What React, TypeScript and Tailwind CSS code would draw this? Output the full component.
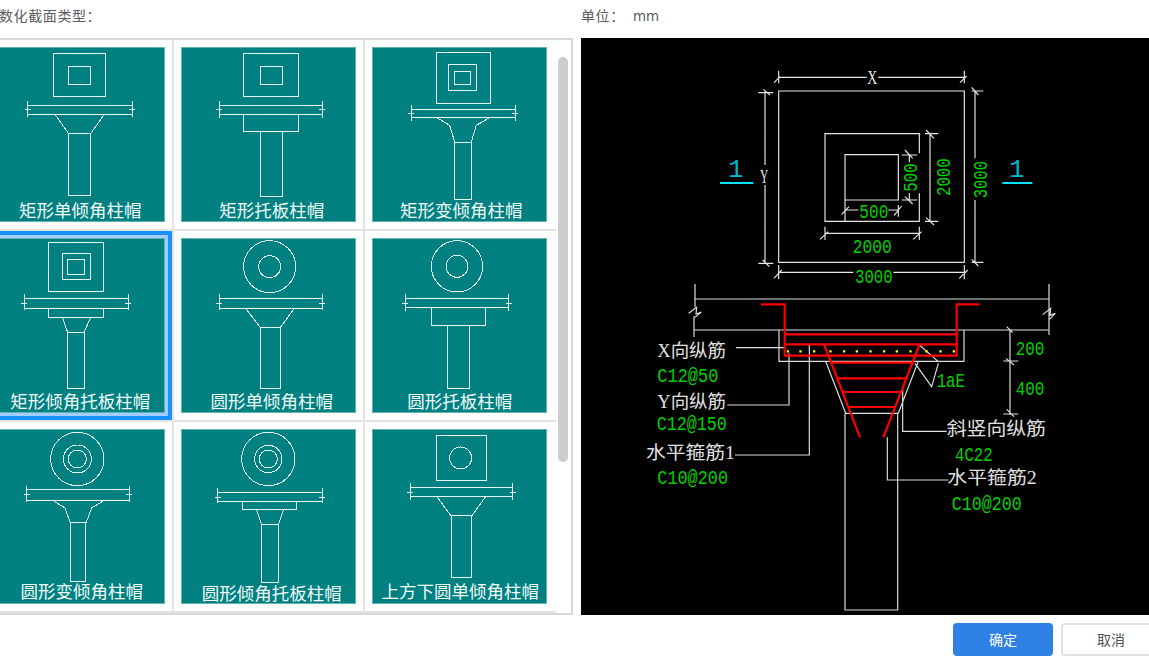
import React from "react";

const Slab = ({ x1, x2, y1, y2, t1, t2 }: { x1: number; x2: number; y1: number; y2: number; t1: number; t2: number }) => {
  const m = (y1 + y2) / 2;
  return (
    <path
      d={`M${x1} ${y1}H${x2} M${x1} ${y2}H${x2} M${x1} ${t1}V${t2} M${x2} ${t1}V${t2} M${x1 - 9} ${m}H${x1 + 9} M${x2 - 9} ${m}H${x2 + 9}`}
    />
  );
};

type Card = { title: string; vx: number; vy: number; tx: number; ty: number; body: React.ReactNode };

const cards: Card[] = [
  {
    title: "矩形单倾角柱帽", vx: -30, vy: 140, tx: 241, ty: 649,
    body: (
      <>
        <rect x={161} y={160} width={156} height={129} />
        <rect x={206} y={198} width={66} height={53} />
        <Slab x1={83} x2={396} y1={315} y2={341} t1={302} t2={350} />
        <path d="M165 342L206 400 M313 342L272 400" />
        <rect x={206} y={400} width={66} height={185} />
      </>
    ),
  },
  {
    title: "矩形托板柱帽", vx: 543, vy: 140, tx: 815, ty: 649,
    body: (
      <>
        <rect x={731} y={160} width={164} height={129} />
        <rect x={780} y={198} width={66} height={53} />
        <Slab x1={657} x2={966} y1={315} y2={341} t1={302} t2={352} />
        <rect x={731} y={341} width={164} height={53} />
        <rect x={780} y={394} width={66} height={195} />
      </>
    ),
  },
  {
    title: "矩形变倾角柱帽", vx: 37, vy: 140, tx: 305, ty: 649,
    body: (
      <>
        <rect x={229} y={157} width={163} height={151} />
        <rect x={266} y={193} width={85} height={78} />
        <rect x={285} y={212} width={47} height={40} />
        <Slab x1={155} x2={467} y1={326} y2={352} t1={313} t2={362} />
        <path d="M232 352L270 375L285 425 M390 352L350 375L335 425" />
        <rect x={285} y={426} width={50} height={171} />
      </>
    ),
  },
  {
    title: "矩形倾角托板柱帽", vx: -30, vy: 40, tx: 241, ty: 549,
    body: (
      <>
        <rect x={146} y={52} width={164} height={148} />
        <rect x={187} y={85} width={85} height={80} />
        <rect x={203} y={104} width={49} height={44} />
        <Slab x1={72} x2={385} y1={222} y2={250} t1={208} t2={256} />
        <rect x={146} y={250} width={164} height={28} />
        <path d="M187 278L203 323 M272 278L252 323" />
        <rect x={203} y={323} width={49} height={169} />
      </>
    ),
  },
  {
    title: "圆形单倾角柱帽", vx: 543, vy: 40, tx: 815, ty: 549,
    body: (
      <>
        <circle cx={809} cy={126} r={78} />
        <circle cx={809} cy={126} r={33} />
        <Slab x1={657} x2={966} y1={222} y2={250} t1={208} t2={256} />
        <path d="M736 250L780 307 M884 250L842 307" />
        <rect x={781} y={307} width={60} height={185} />
      </>
    ),
  },
  {
    title: "圆形托板柱帽", vx: 22, vy: 25, tx: 285, ty: 534,
    body: (
      <>
        <circle cx={277} cy={110} r={77} />
        <circle cx={277} cy={110} r={33} />
        <Slab x1={121} x2={432} y1={207} y2={234} t1={194} t2={244} />
        <rect x={199} y={234} width={163} height={52} />
        <rect x={248} y={286} width={66} height={191} />
      </>
    ),
  },
  {
    title: "圆形变倾角柱帽", vx: -30, vy: 28, tx: 245, ty: 535,
    body: (
      <>
        <circle cx={232} cy={118} r={80} />
        <circle cx={232} cy={118} r={42} />
        <circle cx={232} cy={118} r={27} />
        <Slab x1={80} x2={388} y1={210} y2={241} t1={198} t2={248} />
        <path d="M158 242L195 265L211 310 M313 242L275 265L258 310" />
        <rect x={211} y={310} width={46} height={174} />
      </>
    ),
  },
  {
    title: "圆形倾角托板柱帽", vx: 543, vy: 28, tx: 815, ty: 542,
    body: (
      <>
        <circle cx={805} cy={118} r={80} />
        <circle cx={805} cy={118} r={41} />
        <circle cx={805} cy={118} r={27} />
        <Slab x1={653} x2={966} y1={218} y2={246} t1={205} t2={250} />
        <rect x={728} y={246} width={162} height={25} />
        <path d="M770 271L785 315 M850 271L835 315" />
        <rect x={785} y={315} width={50} height={173} />
      </>
    ),
  },
  {
    title: "上方下圆单倾角柱帽", vx: 37, vy: 28, tx: 302, ty: 535,
    body: (
      <>
        <rect x={229} y={48} width={152} height={133} />
        <circle cx={303} cy={115} r={33} />
        <Slab x1={151} x2={459} y1={203} y2={231} t1={190} t2={240} />
        <path d="M232 231L274 289 M378 231L336 289" />
        <rect x={275} y={289} width={60} height={184} />
      </>
    ),
  },
];

const Thumb = ({ card, selected }: { card: Card; selected: boolean }) => (
  <div className="relative border-b-2 border-r-2 border-[#e4e4e4] pl-[7px] pt-[7px] [&:nth-child(3n)]:border-r-0">
    <div className="h-[175px] w-[175px] bg-[#008080] shadow-[inset_0_0_0_1px_#63b3af]">
      <svg viewBox={`${card.vx} ${card.vy} 525 525`} width={175} height={175} className="block overflow-visible">
        <g fill="none" stroke="#e4f5f3" strokeWidth={3} shapeRendering="crispEdges">
          {card.body}
        </g>
        <text x={card.tx} y={card.ty} textAnchor="middle" fontSize={52.5} fill="#f2fafa">
          {card.title}
        </text>
      </svg>
    </div>
    {selected && (
      <div className="absolute bottom-0 left-0 right-0 top-0 border-4 border-[#1890ff] shadow-[inset_0_0_0_3px_#a4ccff]" />
    )}
  </div>
);

const G = ({ x, y, w, children, fill = "#00d200" }: { x: number; y: number; w: number; children: string; fill?: string }) => (
  <text x={x} y={y} textLength={w} lengthAdjust="spacingAndGlyphs" fontSize={58} fill={fill}>
    {children}
  </text>
);

const RotG = ({ x, y, w, children }: { x: number; y: number; w: number; children: string }) => (
  <g transform={`translate(${x} ${y}) rotate(-90)`}>
    <G x={0} y={0} w={w}>
      {children}
    </G>
  </g>
);

const L = ({ x, y, w, children }: { x: number; y: number; w: number; children: string }) => (
  <text
    x={x}
    y={y}
    textLength={w}
    lengthAdjust="spacingAndGlyphs"
    fontSize={54}
    fill="#e0e0e0"
    className="font-['Liberation_Serif','Noto_Sans_CJK_SC',serif]"
  >
    {children}
  </text>
);

const Drawing = () => (
  <svg viewBox="581 38 568 577" width={568} height={577} className="block">
    <g transform="translate(700 50) scale(0.33333)" className="font-['Liberation_Mono',monospace]">
      <path
        fill="none"
        stroke="#e6e6e6"
        strokeWidth={3.5}
        d="M236 123H793V637H236Z M658 310V251H375V514H658V430 M435 314H595V450H435Z M435 450V514
        M236 82H500 M535 82H793 M236 62V100 M793 62V100 M222 98L240 80 M780 98L800 78
        M195 125V345 M195 405V640 M175 128H220 M175 640H220 M190 118L210 135 M188 630L208 650
        M825 123V325 M825 450V637 M815 123H850 M815 637H850 M815 112L835 135 M815 628L835 648
        M690 251V514 M675 251H715 M675 514H715 M678 240L702 265 M678 503L702 525
        M628 315V337 M628 430V450 M605 315H652 M605 450H652 M615 300L638 325 M615 440L638 462
        M435 480H475 M565 480H595 M425 493L447 470 M582 497L605 468 M595 465V500
        M375 550H658 M375 530V570 M658 530V570 M360 568L385 545 M640 568L665 545
        M236 667H460 M580 667H793 M236 645V688 M793 645V688 M222 685L245 660 M778 685L803 660"
      />
      <g className="font-['Liberation_Serif',serif]">
        <G x={502} y={102} w={30} fill="#e6e6e6">X</G>
        <G x={180} y={400} w={25} fill="#e6e6e6">Y</G>
      </g>
      <RotG x={862} y={445} w={112}>3000</RotG>
      <RotG x={750} y={438} w={113}>2000</RotG>
      <RotG x={650} y={425} w={85}>500</RotG>
      <G x={478} y={503} w={87}>500</G>
      <G x={458} y={610} w={117}>2000</G>
      <G x={465} y={698} w={113}>3000</G>
      <text x={85} y={380} fontSize={76} fill="#00b8cc">1</text>
      <text x={928} y={380} fontSize={76} fill="#00b8cc">1</text>
      <path d="M60 399H160 M907 399H997" stroke="#00e4f4" strokeWidth={6} />
    </g>
    <g transform="translate(640 290) scale(0.33333)" className="font-['Liberation_Mono',monospace]">
      <path
        fill="none"
        stroke="#dedede"
        strokeWidth={3.5}
        d="M165 -18V52 M162 78V141 M165 27H1227 M162 120H1227 M1227 -18V135
        M146 70L170 52L168 72L184 66 L165 82 M1208 74L1232 55L1230 76L1246 70L1228 88
        M417 120V214H972V120
        M557 214L617 370 M835 214L775 370 M615 370H775 M615 370V960H773V370
        M288 173H434 M262 345H447V190 M285 495H508V165 M920 424H788V295 M925 570H742V442
        M838 165L895 215 M825 220L875 290L895 220
        M1110 118V375 M1090 213H1135 M1090 372H1135 M1100 110L1118 128 M1098 205L1122 225 M1100 358L1122 380"
      />
      <path
        fill="none"
        stroke="#ff0000"
        strokeWidth={6.5}
        d="M363 43H434V197H950V43H1018 M434 133H950 M434 163H950 M553 165L660 442 M838 165L730 442
        M570 218H822 M590 265H803 M607 306H785 M627 351H767"
      />
      <path
        stroke="#ffff00"
        strokeWidth={7}
        d="M440 184h7 M478 184h7 M519 184h7 M568 184h7 M609 184h7 M647 184h7 M688 184h7 M729 184h7 M767 184h7 M808 184h7 M856 184h7 M898 184h7 M938 184h7"
      />
      <G x={890} y={290} w={85}>1aE</G>
      <G x={1127} y={196} w={86}>200</G>
      <G x={1127} y={316} w={86}>400</G>
      <G x={52} y={275} w={183}>C12@50</G>
      <G x={50} y={420} w={210}>C12@150</G>
      <G x={52} y={582} w={212}>C10@200</G>
      <G x={945} y={512} w={113}>4C22</G>
      <G x={935} y={660} w={210}>C10@200</G>
      <L x={52} y={200} w={206}>X向纵筋</L>
      <L x={52} y={354} w={206}>Y向纵筋</L>
      <L x={18} y={508} w={267}>水平箍筋1</L>
      <L x={920} y={436} w={298}>斜竖向纵筋</L>
      <L x={922} y={583} w={268}>水平箍筋2</L>
    </g>
  </svg>
);

export default function App() {
  return (
    <div className="flex h-[658px] w-[1149px] flex-col overflow-hidden bg-white font-['Noto_Sans_CJK_SC','Liberation_Sans',sans-serif]">
      <div className="flex h-[38px] shrink-0 items-center pb-[8px] text-[14px] text-[#5c5c5c]">
        <span className="-ml-[1px] w-[582px] tracking-[0.6px]">数化截面类型：</span>
        <span className="w-[52px] tracking-[0.6px]">单位：</span>
        <span className="font-['Noto_Sans',sans-serif] text-[14px]">mm</span>
      </div>
      <div className="flex h-[577px] shrink-0">
        <div className="relative -ml-[17px] w-[590px] shrink-0 border-r-2 border-b-2 border-t-2 border-[#d8d8d8]">
          <div className="grid grid-cols-[191px_191px_191px] grid-rows-[191px_191px_191px]">
            {cards.map((c, i) => (
              <Thumb key={c.title} card={c} selected={i === 3} />
            ))}
          </div>
          <div className="absolute left-[575px] top-[17px] h-[405px] w-[10px] rounded-[5px] bg-[#cdcdcd]" />
        </div>
        <div className="ml-[8px] flex-1 bg-black">
          <Drawing />
        </div>
      </div>
      <div className="-mr-[12px] flex justify-end gap-[8px] pt-[8px]">
        <button className="h-[33px] w-[100px] rounded-[4px] bg-[#2e80e4] text-[14px] text-white">确定</button>
        <button className="h-[33px] w-[100px] rounded-[4px] border-2 border-[#e0e0e0] bg-white text-[14px] text-[#555555]">取消</button>
      </div>
    </div>
  );
}
